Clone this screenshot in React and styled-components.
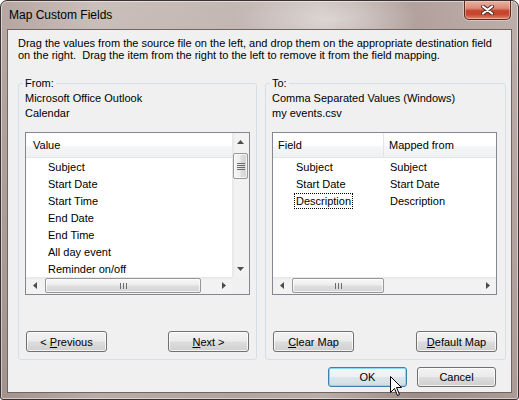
import React from 'react';
import styled, { createGlobalStyle, css } from 'styled-components';

const GlobalStyle = createGlobalStyle`
  html, body { margin: 0; padding: 0; background: #ffffff; }
  body {
    font-family: "Liberation Sans", Arial, sans-serif;
    font-size: 11px;
    color: #000;
  }
  * { box-sizing: border-box; }
`;

const Window = styled.div`
  position: relative;
  width: 519px;
  height: 400px;
  display: flex;
  flex-direction: column;
  padding: 0 6px 6px 6px;
  border: 1px solid #3a3230;
  border-radius: 7px 7px 3px 3px;
  background:
    radial-gradient(ellipse 90px 30px at 330px 18px, rgba(255, 255, 255, 0.35), transparent),
    linear-gradient(180deg, rgba(255, 255, 255, 0.12), rgba(0, 0, 0, 0.06)),
    linear-gradient(90deg, #ad9a95 0%, #c3b6b2 18%, #bcaeaa 45%, #c4b8b4 62%, #a8958f 80%, #b6a49f 100%);
  box-shadow: inset 0 0 0 1px rgba(255, 255, 255, 0.5);
  overflow: hidden;
`;

const TitleBar = styled.div`
  height: 28px;
  display: flex;
  align-items: flex-start;
  justify-content: space-between;
`;

const Title = styled.div`
  margin-top: 7px;
  padding-left: 2px;
  line-height: 15px;
  font-size: 12px;
  color: #000;
`;

const CloseButton = styled.div`
  width: 47px;
  height: 19px;
  margin-right: 1px;
  display: flex;
  align-items: center;
  justify-content: center;
  border: 1px solid #5a2a22;
  border-top: none;
  border-radius: 0 0 5px 5px;
  background: linear-gradient(180deg, #e9b2a3 0%, #dc8a74 40%, #c4432c 55%, #c8472f 75%, #df8a6c 100%);
  box-shadow: inset 0 0 0 1px rgba(255, 220, 210, 0.45), 0 0 0 1px rgba(255, 255, 255, 0.35);
`;

const Client = styled.div`
  flex: 1;
  display: flex;
  flex-direction: column;
  background: #f0f0f0;
  border: 1px solid #6f6663;
  padding: 7px 5px 4px 10px;
`;

const Description = styled.p`
  margin: 0;
  height: 24px;
  line-height: 12px;
  white-space: nowrap;
`;

const GroupRow = styled.div`
  display: flex;
  gap: 8px;
  margin-top: 15px;
  height: 284px;
`;

const GroupBox = styled.fieldset`
  margin: 0;
  width: ${(p) => p.$width}px;
  height: 284px;
  min-width: 0;
  display: flex;
  flex-direction: column;
  border: 1px solid #d5dfe5;
  border-radius: 3px;
  padding: 1px ${(p) => p.$padRight}px 7px 6px;
`;

const Legend = styled.legend`
  padding: 0 2px;
  margin-left: -2px;
  line-height: 14px;
`;

const SourceLine = styled.div`
  line-height: 15px;
  white-space: nowrap;
`;

const ListBox = styled.div`
  margin-top: 11px;
  height: 163px;
  border: 1px solid #828790;
  background: #fff;
  display: grid;
  grid-template-columns: ${(p) => (p.$vscroll ? '1fr 17px' : '1fr')};
  grid-template-rows: 1fr 17px;
`;

const ListContent = styled.div`
  overflow: hidden;
`;

const Header = styled.div`
  height: 25px;
  display: flex;
  background: linear-gradient(180deg, #ffffff 0%, #ffffff 55%, #f5f6f7 56%, #eef0f2 100%);
  border-bottom: 1px solid #e3e4e6;
`;

const HeaderCell = styled.div`
  width: ${(p) => (p.$width ? `${p.$width}px` : 'auto')};
  flex: ${(p) => (p.$width ? 'none' : 1)};
  padding-left: ${(p) => p.$pad}px;
  padding-top: 1px;
  line-height: 23px;
  border-right: ${(p) => (p.$divider ? '1px solid #e5e5e5' : 'none')};
`;

const Row = styled.div`
  height: 17px;
  display: flex;
  padding-top: 1px;
  line-height: 16px;
  white-space: nowrap;
`;

const Cell = styled.div`
  width: ${(p) => (p.$width ? `${p.$width}px` : 'auto')};
  flex: ${(p) => (p.$width ? 'none' : 1)};
  padding-left: ${(p) => p.$pad}px;
`;

const Focus = styled.span`
  display: inline-block;
  height: 16px;
  line-height: 14px;
  margin-top: -1px;
  margin-left: -2px;
  padding: 0 1px;
  border: 1px dotted #000;
`;

const VScroll = styled.div`
  display: flex;
  flex-direction: column;
  background: linear-gradient(90deg, #e6e6e6 0%, #f2f2f2 20%, #f2f2f2 100%);
`;

const HScroll = styled.div`
  display: flex;
  background: linear-gradient(180deg, #e6e6e6 0%, #f2f2f2 20%, #f2f2f2 100%);
`;

const ArrowButton = styled.div`
  width: 17px;
  height: 17px;
  flex: none;
  display: flex;
  align-items: center;
  justify-content: center;
  ${(p) => p.$push && css`margin-${p.$push}: auto;`}
`;

const HThumb = styled.div`
  margin: 1px 0 1px 2px;
  width: ${(p) => p.$width}px;
  border: 1px solid #979797;
  border-radius: 2px;
  background: linear-gradient(180deg, #f7f7f7 0%, #ededed 45%, #dedede 55%, #d3d3d3 100%);
  box-shadow: inset 0 0 0 1px rgba(255, 255, 255, 0.7);
  display: flex;
  align-items: center;
  justify-content: center;
`;

const VThumb = styled.div`
  margin: 3px 1px 0 1px;
  height: 26px;
  border: 1px solid #979797;
  border-radius: 2px;
  background: linear-gradient(90deg, #f7f7f7 0%, #ededed 45%, #dedede 55%, #d3d3d3 100%);
  box-shadow: inset 0 0 0 1px rgba(255, 255, 255, 0.7);
  display: flex;
  align-items: center;
  justify-content: center;
`;

const Corner = styled.div`
  background: #f0f0f0;
`;

const ButtonRow = styled.div`
  margin-top: auto;
  display: flex;
  justify-content: space-between;
  padding: ${(p) => p.$pad};
`;

const Button = styled.button`
  width: ${(p) => p.$w}px;
  height: ${(p) => p.$h}px;
  padding: 0;
  font: inherit;
  color: #000;
  border: 1px solid #707070;
  border-radius: 3px;
  background: linear-gradient(180deg, #f3f3f3 0%, #ebebeb 48%, #dddddd 52%, #cfcfcf 100%);
  box-shadow: inset 0 0 0 1px rgba(255, 255, 255, 0.75);
  ${(p) =>
    p.$default &&
    css`
      border-color: #3c7fb1;
      background: linear-gradient(180deg, #f4f8fa 0%, #ebf1f4 48%, #dde6eb 52%, #d2dde3 100%);
      box-shadow: inset 0 0 0 1px #88d7f3;
    `}
`;

const DialogButtons = styled.div`
  display: flex;
  justify-content: flex-end;
  gap: 10px;
  margin-top: 7px;
  margin-right: 10px;
`;

const Cursor = styled.svg`
  position: absolute;
  left: 389px;
  top: 375px;
`;

const Up = () => (
  <svg width="7" height="4" viewBox="0 0 7 4">
    <polygon points="3.5,0 7,4 0,4" fill="#4d4d4d" />
  </svg>
);
const Down = () => (
  <svg width="7" height="4" viewBox="0 0 7 4">
    <polygon points="0,0 7,0 3.5,4" fill="#4d4d4d" />
  </svg>
);
const Left = () => (
  <svg width="4" height="7" viewBox="0 0 4 7">
    <polygon points="4,0 4,7 0,3.5" fill="#4d4d4d" />
  </svg>
);
const Right = () => (
  <svg width="4" height="7" viewBox="0 0 4 7">
    <polygon points="0,0 4,3.5 0,7" fill="#4d4d4d" />
  </svg>
);

const GripV = () => (
  <svg width="7" height="6" viewBox="0 0 7 6">
    {[0, 3, 6].map((x) => (
      <rect key={x} x={x} y="0" width="1" height="6" fill="#6b6b6b" />
    ))}
  </svg>
);
const GripH = () => (
  <svg width="8" height="7" viewBox="0 0 8 7">
    {[0, 2, 4, 6].map((y) => (
      <rect key={y} x="0" y={y} width="8" height="1" fill="#6b6b6b" />
    ))}
  </svg>
);

const sourceFields = ['Subject', 'Start Date', 'Start Time', 'End Date', 'End Time', 'All day event', 'Reminder on/off'];
const mapping = [
  ['Subject', 'Subject'],
  ['Start Date', 'Start Date'],
  ['Description', 'Description'],
];

export default function App() {
  return (
    <>
      <GlobalStyle />
      <Window>
        <TitleBar>
          <Title>Map Custom Fields</Title>
          <CloseButton>
            <svg width="13" height="10" viewBox="0 0 13 10">
              <path d="M2 1.5 L11 8.5 M11 1.5 L2 8.5" stroke="#4a2f2a" strokeWidth="4" strokeLinecap="round" />
              <path d="M2 1.5 L11 8.5 M11 1.5 L2 8.5" stroke="#ffffff" strokeWidth="2.2" strokeLinecap="round" />
            </svg>
          </CloseButton>
        </TitleBar>
        <Client>
          <Description>
            Drag the values from the source file on the left, and drop them on the appropriate destination field
            <br />
            on the right.&nbsp; Drag the item from the right to the left to remove it from the field mapping.
          </Description>
          <GroupRow>
            <GroupBox $width={239} $padRight={6}>
              <Legend>From:</Legend>
              <SourceLine>Microsoft Office Outlook</SourceLine>
              <SourceLine>Calendar</SourceLine>
              <ListBox $vscroll>
                <ListContent>
                  <Header>
                    <HeaderCell $pad={7}>Value</HeaderCell>
                  </Header>
                  {sourceFields.map((f) => (
                    <Row key={f}>
                      <Cell $pad={22}>{f}</Cell>
                    </Row>
                  ))}
                </ListContent>
                <VScroll>
                  <ArrowButton>
                    <Up />
                  </ArrowButton>
                  <VThumb>
                    <GripH />
                  </VThumb>
                  <ArrowButton $push="top">
                    <Down />
                  </ArrowButton>
                </VScroll>
                <HScroll>
                  <ArrowButton>
                    <Left />
                  </ArrowButton>
                  <HThumb $width={156}>
                    <GripV />
                  </HThumb>
                  <ArrowButton $push="left">
                    <Right />
                  </ArrowButton>
                </HScroll>
                <Corner />
              </ListBox>
              <ButtonRow $pad="0 1px 0 1px">
                <Button $w={81} $h={21}>
                  &lt; <u>P</u>revious
                </Button>
                <Button $w={81} $h={21}>
                  <u>N</u>ext &gt;
                </Button>
              </ButtonRow>
            </GroupBox>
            <GroupBox $width={241} $padRight={8}>
              <Legend>To:</Legend>
              <SourceLine>Comma Separated Values (Windows)</SourceLine>
              <SourceLine>my events.csv</SourceLine>
              <ListBox>
                <ListContent>
                  <Header>
                    <HeaderCell $width={111} $pad={5} $divider>
                      Field
                    </HeaderCell>
                    <HeaderCell $pad={5}>Mapped from</HeaderCell>
                  </Header>
                  {mapping.map(([field, from]) => (
                    <Row key={field}>
                      <Cell $width={111} $pad={23}>
                        {field === 'Description' ? <Focus>{field}</Focus> : field}
                      </Cell>
                      <Cell $pad={6}>{from}</Cell>
                    </Row>
                  ))}
                </ListContent>
                <HScroll>
                  <ArrowButton>
                    <Left />
                  </ArrowButton>
                  <HThumb $width={92}>
                    <GripV />
                  </HThumb>
                  <ArrowButton $push="left">
                    <Right />
                  </ArrowButton>
                </HScroll>
              </ListBox>
              <ButtonRow $pad="0 0 0 1px">
                <Button $w={81} $h={21}>
                  <u>C</u>lear Map
                </Button>
                <Button $w={81} $h={21}>
                  <u>D</u>efault Map
                </Button>
              </ButtonRow>
            </GroupBox>
          </GroupRow>
          <DialogButtons>
            <Button $w={79} $h={20} $default>
              OK
            </Button>
            <Button $w={79} $h={20}>
              Cancel
            </Button>
          </DialogButtons>
        </Client>
        <Cursor width="13" height="21" viewBox="0 0 13 21">
          <path
            d="M0.5 0.5 L0.5 16.5 L4.5 12.5 L7.5 19.5 L9.5 18.5 L6.5 11.5 L11.5 11.5 Z"
            fill="#ffffff"
            stroke="#000000"
            strokeWidth="1"
            strokeLinejoin="miter"
          />
        </Cursor>
      </Window>
    </>
  );
}
